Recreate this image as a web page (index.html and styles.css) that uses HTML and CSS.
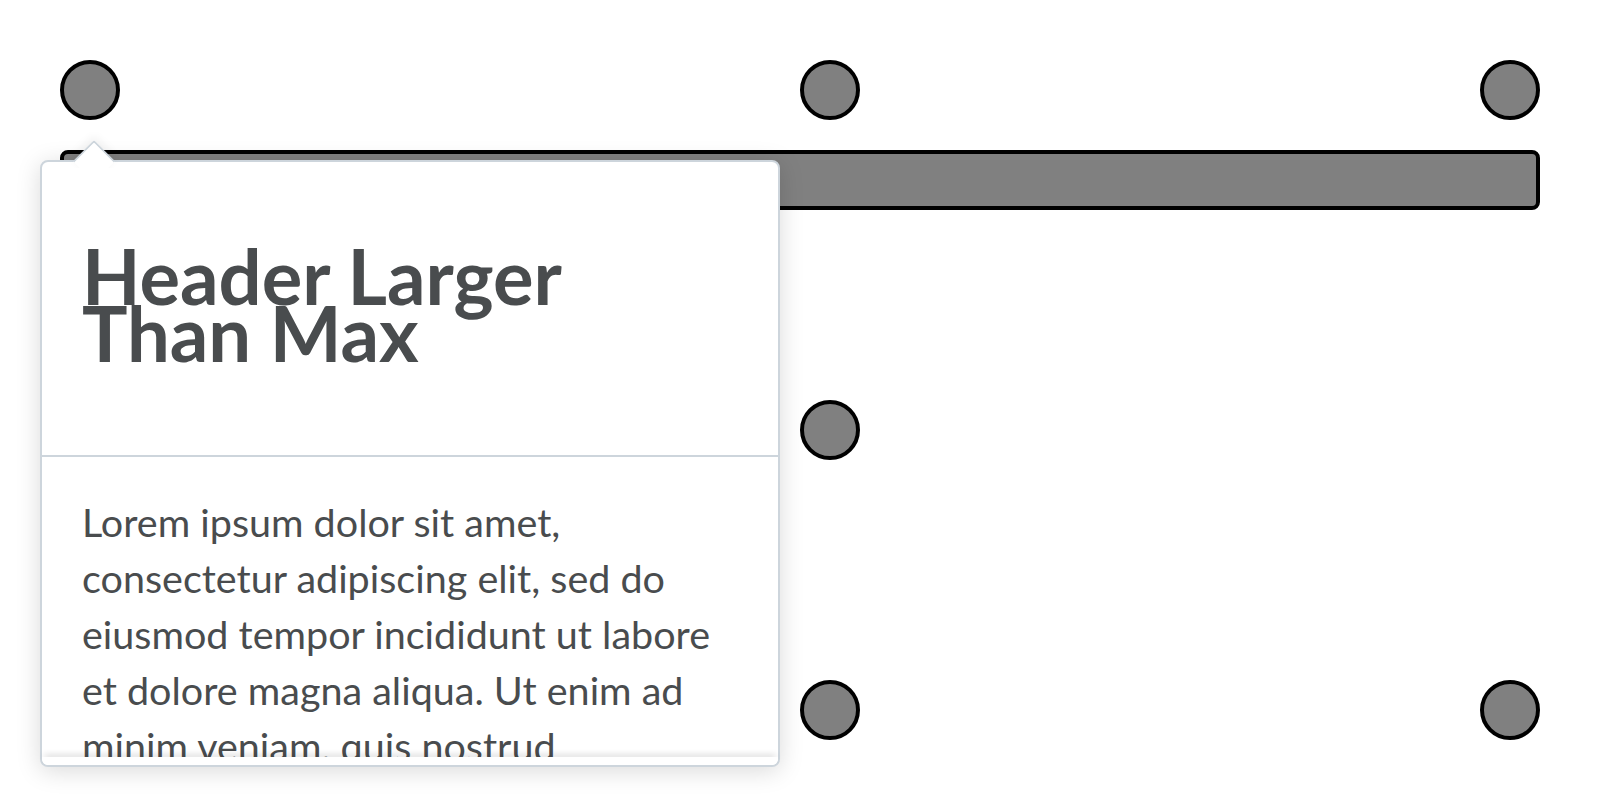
FILE: index.html
```html
<!DOCTYPE html>
<html lang="en">
<head>
<meta charset="utf-8">
<title>Tooltip test</title>
<link rel="stylesheet" href="styles.css">
</head>
<body>
<div class="canvas">
  <div class="dot dot-left"></div>
  <div class="dot dot-center"></div>
  <div class="dot dot-right"></div>
  <div class="bar"></div>
  <div class="dot dot-middle"></div>
  <div class="dot dot-center dot-bottom"></div>
  <div class="dot dot-right dot-bottom"></div>

  <div class="tooltip">
    <div class="tooltip-arrow"></div>
    <div class="tooltip-header">
      <h1 class="tooltip-title">Header Larger Than Max</h1>
    </div>
    <div class="tooltip-body">
      <p class="tooltip-text">Lorem ipsum dolor sit amet, consectetur adipiscing elit, sed do eiusmod tempor incididunt ut labore et dolore magna aliqua. Ut enim ad minim veniam, quis nostrud exercitation ullamco laboris nisi ut aliquip ex ea commodo consequat.</p>
    </div>
    <div class="tooltip-footer"></div>
  </div>
</div>
</body>
</html>
```

FILE: styles.css
```css
html, body {
  margin: 0;
  padding: 0;
  background: #ffffff;
}

body {
  font-family: Lato, "Liberation Sans", sans-serif;
  color: #494c4e;
}

.canvas {
  position: relative;
  box-sizing: border-box;
  width: 1600px;
  height: 800px;
  padding: 60px;
  display: grid;
  grid-template-columns: 1fr 1fr;
  grid-template-rows: 60px 60px 1fr 60px;
  row-gap: 30px;
  overflow: hidden;
}

.dot {
  box-sizing: border-box;
  width: 60px;
  height: 60px;
  border: 4px solid #000000;
  border-radius: 50%;
  background: #808080;
}

.dot-left {
  grid-column: 1;
  grid-row: 1;
  justify-self: start;
}

.dot-center {
  grid-column: 2;
  grid-row: 1;
  justify-self: start;
}

.dot-right {
  grid-column: 2;
  grid-row: 1;
  justify-self: end;
}

.dot-bottom {
  grid-row: 4;
}

.dot-middle {
  grid-column: 2;
  grid-row: 3;
  justify-self: start;
  align-self: start;
  margin-top: 160px;
}

.bar {
  grid-column: 1 / 3;
  grid-row: 2;
  box-sizing: border-box;
  border: 4px solid #000000;
  border-radius: 8px;
  background: #808080;
}

.tooltip {
  position: absolute;
  left: 40px;
  top: 160px;
  box-sizing: border-box;
  width: 740px;
  height: 607px;
  background: #ffffff;
  border: 2px solid #cdd5dc;
  border-radius: 8px;
  box-shadow: 0 4px 24px rgba(0, 0, 0, 0.15);
  display: flex;
  flex-direction: column;
}

.tooltip-arrow {
  position: absolute;
  left: 37px;
  top: -16px;
  width: 28px;
  height: 28px;
  background: #ffffff;
  border-top: 2px solid #cdd5dc;
  border-left: 2px solid #cdd5dc;
  border-top-left-radius: 3px;
  transform: rotate(45deg);
  box-shadow: -3px -3px 10px rgba(0, 0, 0, 0.06);
  clip-path: polygon(-20px -20px, 60px -20px, -20px 60px);
}

.tooltip-header {
  flex: 0 0 auto;
  height: 295px;
  box-sizing: border-box;
  padding: 85px 40px 0 40px;
  border-bottom: 2px solid #cdd5dc;
  position: relative;
}

.tooltip-title {
  margin: 0;
  font-size: 76px;
  font-weight: 700;
  line-height: 57px;
  color: #494c4e;
}

.tooltip-body {
  flex: 1 1 auto;
  overflow: hidden;
  padding: 37px 40px 0 40px;
}

.tooltip-text {
  margin: 0;
  font-size: 39.5px;
  font-weight: 400;
  line-height: 56px;
  color: #494c4e;
}

.tooltip-footer {
  flex: 0 0 8px;
  background: #ffffff;
  border-radius: 0 0 6px 6px;
  box-shadow: 0 -4px 6px -2px rgba(0, 0, 0, 0.18);
  position: relative;
}
```
